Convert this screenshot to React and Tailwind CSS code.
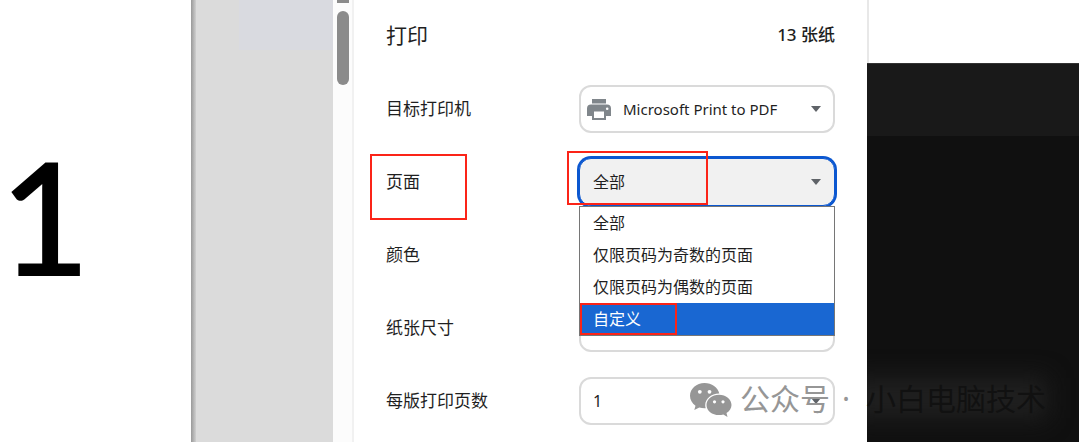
import { useState } from 'react'

// ── Options ───────────────────────────────────────────────────────────────────
const PAGE_OPTIONS = ['全部', '仅限页码为奇数的页面', '仅限页码为偶数的页面', '自定义']

// ── Icons ─────────────────────────────────────────────────────────────────────
function PrinterIcon({ className }) {
  return (
    <svg viewBox="0 0 24 22" className={className} aria-hidden="true">
      <path
        fill="#80868b"
        fillRule="evenodd"
        d="M5 0h14v4.6H5zM4 5.6h16a4 4 0 0 1 4 4V17h-5v4H5v-4H0V9.600a4 4 0 0 1 4-4zM7 12.400v6.600h10v-6.600zM20.200 8.400a1.300 1.300 0 1 0 0 2.600 1.300 1.300 0 0 0 0-2.600z"
      />
    </svg>
  )
}

function Caret() {
  return (
    <svg
      viewBox="0 0 10 6"
      className="pointer-events-none absolute right-3.5 top-1/2 h-1.5 w-2.5 -translate-y-1/2"
      aria-hidden="true"
    >
      <path d="M0 0h10L5 6z" fill="#5f6368" />
    </svg>
  )
}

function WeChatIcon() {
  return (
    <svg viewBox="0 0 42 35" className="h-[35px] w-[42px] shrink-0" aria-hidden="true">
      <path
        fill="#969696"
        d="M14.500 1C6.500 1 0 6.700 0 13.800c0 4 2.100 7.500 5.500 9.900L4.300 28l5-2.600c1.700.5 3.400.8 5.200.8h1.200c-.3-1-.5-2-.5-3 0-6.500 6.100-11.700 13.700-11.700h.4C27.900 5.500 21.800 1 14.500 1z"
      />
      <path
        fill="#969696"
        d="M41.500 23c0-5.800-5.600-10.300-12.500-10.300S16.500 17.200 16.500 23 22.100 33.100 29 33.100c1.500 0 3-.2 4.300-.6L37.500 35l-1-4c3-1.900 5-4.700 5-8z"
      />
      <g fill="#fff">
        <circle cx="9.800" cy="9.800" r="1.900" />
        <circle cx="19.500" cy="9.800" r="1.900" />
        <circle cx="24.500" cy="19.800" r="1.600" />
        <circle cx="33" cy="19.800" r="1.600" />
      </g>
    </svg>
  )
}

// ── Red callout frame ─────────────────────────────────────────────────────────
function Callout({ className }) {
  return (
    <span className={`pointer-events-none absolute z-20 border-2 border-[#fb2418] ${className}`} />
  )
}

// ── Setting row ───────────────────────────────────────────────────────────────
function SettingRow({ id, label, marked, children }) {
  return (
    <div className="flex h-12 items-center justify-between">
      <label htmlFor={id} className="relative text-[17px] leading-6">
        {label}
        {marked && <Callout className="-left-4 -top-4 h-[66px] w-[97px]" />}
      </label>
      <div className="relative h-12 w-64">{children}</div>
    </div>
  )
}

function PlainSelect({ id, value, className = 'pl-3 text-[16px]' }) {
  return (
    <>
      <select
        id={id}
        defaultValue={value}
        className={`h-full w-full appearance-none rounded-xl border-2 border-[#dadada] bg-white pr-8 ${className}`}
      >
        <option>{value}</option>
      </select>
      <Caret />
    </>
  )
}

// ── Pages drop-down, opened ───────────────────────────────────────────────────
function PagesSelect() {
  const [value, setValue] = useState('全部')
  const [active, setActive] = useState('自定义')

  return (
    <>
      <select
        id="pages"
        value={value}
        onChange={(e) => setValue(e.target.value)}
        className="h-full w-full appearance-none rounded-xl border border-[#0b57d0] bg-[#f1f1f1] pl-[13px] pr-8 text-[16px] outline-none ring-2 ring-[#0b57d0]"
      >
        {PAGE_OPTIONS.map((o) => <option key={o}>{o}</option>)}
      </select>
      <Caret />
      <Callout className="-left-3 -top-[7px] h-[54px] w-[141px]" />

      <ul
        role="listbox"
        aria-label="页面"
        className="absolute inset-x-0 top-full z-10 border border-[#767676] bg-white"
      >
        {PAGE_OPTIONS.map((o) => (
          <li
            key={o}
            role="option"
            aria-selected={o === active}
            onMouseEnter={() => setActive(o)}
            onClick={() => setValue(o)}
            className={`relative h-8 pl-[13px] text-[16px] leading-8 ${o === active ? 'bg-[#1967d2] text-white' : ''}`}
          >
            {o}
            {o === '自定义' && <Callout className="inset-y-0 left-0 w-[97px]" />}
          </li>
        ))}
      </ul>
    </>
  )
}

// ── Sheet preview ─────────────────────────────────────────────────────────────
function Preview() {
  return (
    <section className="flex w-[354px] shrink-0">
      <div className="flex w-[191px] items-center pb-3">
        <span className="font-[Lato] text-[155px] leading-none text-black [-webkit-text-stroke:2px_black]">
          1
        </span>
      </div>
      <div className="flex flex-1 bg-[#dbdbdb]">
        <div className="w-[5px] bg-linear-to-r from-[#999] to-[#cfcfcf]" />
        <div className="ml-auto h-[50px] w-[94px] bg-[#d9dae0]" />
      </div>
      <div className="flex w-[21px] flex-col items-center gap-2 border-r-2 border-[#f1f1f1] bg-[#fcfcfc]">
        <div className="h-[3px] w-3 bg-[#8b8b8b]" />
        <div className="h-[74px] w-3 rounded-full bg-[#8b8b8b]" />
      </div>
    </section>
  )
}

// ── Watermark ─────────────────────────────────────────────────────────────────
function Watermark() {
  return (
    <div className="pointer-events-none absolute bottom-6 right-[34px] z-30 flex items-center whitespace-nowrap text-[30px] leading-10">
      <WeChatIcon />
      <span className="ml-2 text-[#969696]">公众号</span>
      <span className="w-9 pr-1 text-center text-[#969696]">·</span>
      <span className="text-[#111]">小白电脑技术</span>
    </div>
  )
}

// ── Print dialog ──────────────────────────────────────────────────────────────
export default function App() {
  return (
    <div className="relative flex min-h-screen overflow-hidden bg-white pb-px font-['Noto_Sans','Noto_Sans_CJK_SC',sans-serif] text-[#1f1f1f]">
      <Preview />

      <main className="w-[513px] pb-4 pl-8 pr-8">
        <header className="flex h-[70px] items-center justify-between">
          <h1 className="text-[21px] leading-8">打印</h1>
          <span className="text-[17px] font-medium leading-6">13 张纸</span>
        </header>

        <div className="flex flex-col gap-[25px] pt-[15px]">
          <SettingRow id="printer" label="目标打印机">
            <PlainSelect
              id="printer"
              value="Microsoft Print to PDF"
              className="pl-[42px] text-[15px]"
            />
            <PrinterIcon className="pointer-events-none absolute left-2 top-3.5 h-[22px] w-6" />
          </SettingRow>
          <SettingRow id="pages" label="页面" marked>
            <PagesSelect />
          </SettingRow>
          <SettingRow id="color" label="颜色">
            <PlainSelect id="color" value="彩色" />
          </SettingRow>
          <SettingRow id="paper" label="纸张尺寸">
            <PlainSelect id="paper" value="A4" />
          </SettingRow>
          <SettingRow id="per-sheet" label="每版打印页数">
            <PlainSelect id="per-sheet" value="1" />
          </SettingRow>
        </div>
      </main>

      {/* Window behind the dialog */}
      <aside className="flex min-w-0 flex-1 flex-col">
        <div className="h-[63px] border-l-2 border-[#e8e8e8] bg-white" />
        <div className="mr-px h-[73px] border-t border-[#333] bg-[#191919]" />
        <div className="mr-px flex flex-1 flex-col justify-end overflow-hidden bg-[#101010] pb-6">
          <div className="-ml-4 mr-8 h-10 bg-[#202020] blur-md" />
        </div>
      </aside>

      <Watermark />
    </div>
  )
}
